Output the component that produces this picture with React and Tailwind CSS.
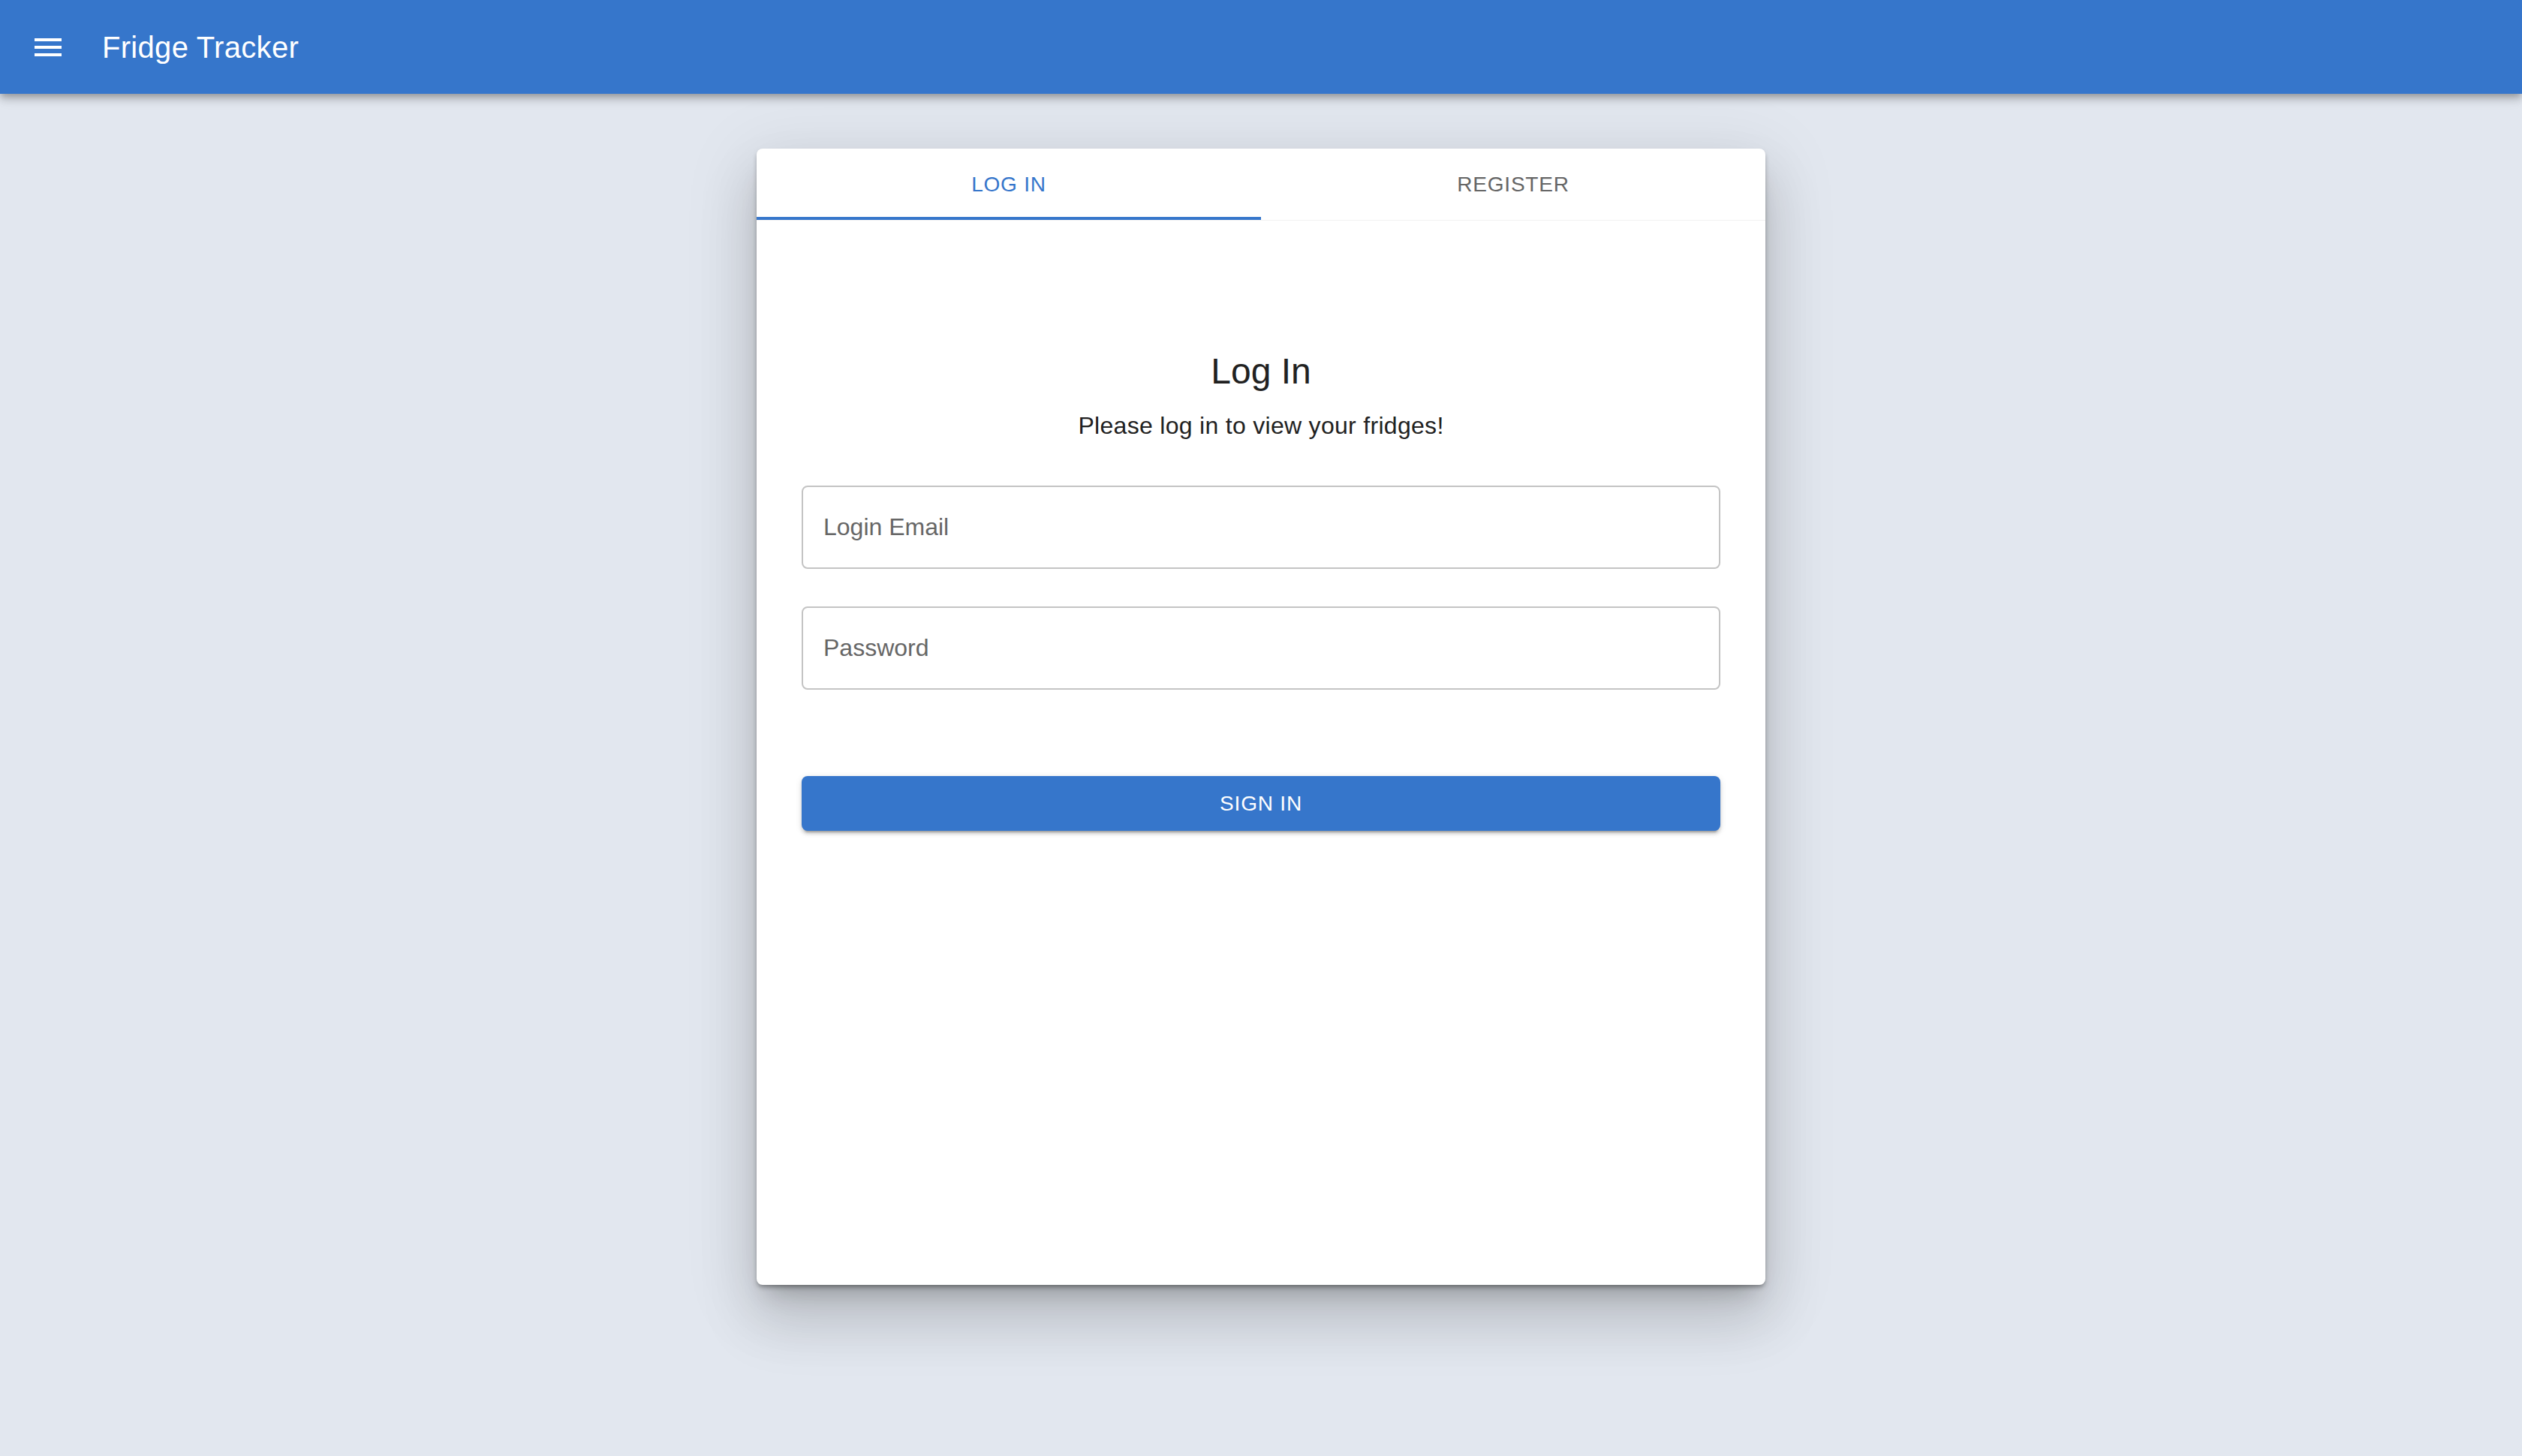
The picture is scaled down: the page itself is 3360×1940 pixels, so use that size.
import React from "react";

export default function App() {
  return (
    <div className="min-h-[1940px] bg-[#e2e7ef] font-['Liberation_Sans',Arial,Helvetica,sans-serif]">
      <header className="relative z-10 flex h-[125px] items-center bg-[#3676cb] shadow-[0_4px_8px_-2px_rgba(0,0,0,0.2),0_8px_10px_0_rgba(0,0,0,0.14),0_2px_20px_0_rgba(0,0,0,0.12)]">
        <button className="ml-[24px] flex h-[80px] w-[80px] items-center justify-center rounded-full text-white">
          <svg width="48" height="48" viewBox="0 0 24 24" fill="currentColor">
            <path d="M3 18h18v-2H3v2zm0-5h18v-2H3v2zm0-7v2h18V6H3z" />
          </svg>
        </button>
        <span className="ml-[32px] text-[40px] leading-[1.6] tracking-[0.0075em] text-white">Fridge Tracker</span>
      </header>
      <main className="flex justify-center pt-[73px]">
        <div className="flex h-[1514px] w-[1344px] flex-col rounded-[8px] bg-white shadow-[0_4px_6px_-1px_rgba(0,0,0,0.35),0_22px_30px_-14px_rgba(0,0,0,0.22),0_48px_76px_6px_rgba(0,0,0,0.12),0_18px_92px_16px_rgba(0,0,0,0.08)]">
          <div className="flex h-[96px] border-b border-[#f2f2f2]">
            <button className="flex flex-1 items-center justify-center border-b-[4px] border-[#3676cb] pt-[4px] text-[28px] uppercase tracking-[0.02857em] text-[#3676cb]">
              Log In
            </button>
            <button className="flex flex-1 items-center justify-center border-b-[4px] border-transparent pt-[4px] text-[28px] uppercase tracking-[0.02857em] text-[#666666]">
              Register
            </button>
          </div>
          <div className="flex flex-col items-center px-[60px] pt-[169px]">
            <h1 className="text-[48px] leading-[64px] text-[#212121]">Log In</h1>
            <p className="mt-[16px] text-[32px] leading-[48px] tracking-[0.00938em] text-[#212121]">
              Please log in to view your fridges!
            </p>
            <input
              className="mt-[56px] h-[111px] w-full rounded-[8px] border-2 border-[#c4c4c4] px-[27px] text-[32px] text-[#212121] outline-none placeholder:text-[#666666]"
              placeholder="Login Email"
            />
            <input
              type="password"
              className="mt-[50px] h-[111px] w-full rounded-[8px] border-2 border-[#c4c4c4] px-[27px] text-[32px] text-[#212121] outline-none placeholder:text-[#666666]"
              placeholder="Password"
            />
            <button className="mt-[115px] flex h-[73px] w-full items-center justify-center rounded-[8px] bg-[#3676cb] text-[28px] uppercase tracking-[0.02857em] text-white shadow-[0_6px_2px_-4px_rgba(0,0,0,0.2),0_4px_4px_0_rgba(0,0,0,0.14),0_2px_10px_0_rgba(0,0,0,0.12)]">
              Sign In
            </button>
          </div>
        </div>
      </main>
    </div>
  );
}
